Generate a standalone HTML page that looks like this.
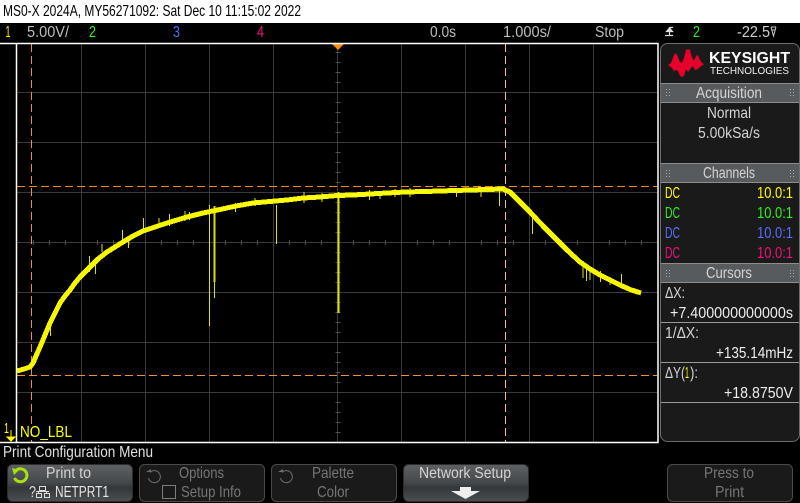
<!DOCTYPE html>
<html><head><meta charset="utf-8">
<style>
html,body{margin:0;padding:0;background:#000;width:800px;height:503px;overflow:hidden}
svg{display:block}
text{font-family:"Liberation Sans",sans-serif;font-size:16px;fill:#d4d4d4;white-space:pre}
.g{stroke:#3a3a3a;stroke-width:1;shape-rendering:crispEdges;fill:none}
.t{stroke:#505050;stroke-width:1;shape-rendering:crispEdges;fill:none}
.dim{fill:#767676}
</style></head><body>
<svg width="800" height="503" viewBox="0 0 800 503" xmlns="http://www.w3.org/2000/svg">
<defs>
<linearGradient id="b1" x1="0" y1="0" x2="0" y2="1"><stop offset="0" stop-color="#5d6163"/><stop offset=".5" stop-color="#44484a"/><stop offset=".62" stop-color="#33373a"/><stop offset="1" stop-color="#4b4f52"/></linearGradient>
</defs>
<rect width="800" height="503" fill="#000"/>
<rect width="800" height="23" fill="#fff"/>
<text x="3" y="16" textLength="298" lengthAdjust="spacingAndGlyphs" style="fill:#000">MS0-X 2024A, MY56271092: Sat Dec 10 11:15:02 2022</text>

<!-- top status row -->
<text x="5.500" y="37" textLength="5" lengthAdjust="spacingAndGlyphs" style="fill:#ff0">1</text>
<text x="27" y="37" textLength="42" lengthAdjust="spacingAndGlyphs" style="fill:#bdbdbd">5.00V/</text>
<text x="89" y="37" textLength="7" lengthAdjust="spacingAndGlyphs" style="fill:#33f01f">2</text>
<text x="173" y="37" textLength="7" lengthAdjust="spacingAndGlyphs" style="fill:#5570ff">3</text>
<text x="257" y="37" textLength="7" lengthAdjust="spacingAndGlyphs" style="fill:#f0107c">4</text>
<text x="430" y="37" textLength="26" lengthAdjust="spacingAndGlyphs" style="fill:#bdbdbd">0.0s</text>
<text x="503" y="37" textLength="48" lengthAdjust="spacingAndGlyphs" style="fill:#bdbdbd">1.000s/</text>
<text x="595" y="37" textLength="29" lengthAdjust="spacingAndGlyphs" style="fill:#bdbdbd">Stop</text>
<path d="M665 35.500H673M669.500 27V35M669.500 27.500H673M666.500 31.500H672.500L669.500 28Z" stroke="#ddd" stroke-width="1.200" fill="#ddd"/>
<text x="693" y="37" textLength="7" lengthAdjust="spacingAndGlyphs" style="fill:#33f01f">2</text>
<text x="737" y="37" textLength="33" lengthAdjust="spacingAndGlyphs" style="fill:#cfcfcf">-22.5</text>
<path d="M771 27h5M771 27l2.500 9 2.500-9M772 30h3" stroke="#ccc" fill="none"/>

<!-- grid -->
<g class="g">
<path d="M81.500 44V442M145.500 44V442M209.500 44V442M273.500 44V442M337.500 44V442M401.500 44V442M465.500 44V442M529.500 44V442M593.500 44V442"/>
<path d="M17 92.500H657M17 142.500H657M17 192.500H657M17 242.500H657M17 292.500H657M17 342.500H657M17 392.500H657"/>
</g>
<g class="t">
<path d="M335.500 52.500h5M335.500 62.500h5M335.500 72.500h5M335.500 82.500h5M335.500 102.500h5M335.500 112.500h5M335.500 122.500h5M335.500 132.500h5M335.500 152.500h5M335.500 162.500h5M335.500 172.500h5M335.500 182.500h5M335.500 202.500h5M335.500 212.500h5M335.500 222.500h5M335.500 232.500h5M335.500 252.500h5M335.500 262.500h5M335.500 272.500h5M335.500 282.500h5M335.500 302.500h5M335.500 312.500h5M335.500 322.500h5M335.500 332.500h5M335.500 352.500h5M335.500 362.500h5M335.500 372.500h5M335.500 382.500h5M335.500 402.500h5M335.500 412.500h5M335.500 422.500h5M335.500 432.500h5"/>
<path d="M33.500 240v5M49.500 240v5M65.500 240v5M97.500 240v5M113.500 240v5M129.500 240v5M161.500 240v5M177.500 240v5M193.500 240v5M225.500 240v5M241.500 240v5M257.500 240v5M289.500 240v5M305.500 240v5M321.500 240v5M353.500 240v5M369.500 240v5M385.500 240v5M417.500 240v5M433.500 240v5M449.500 240v5M481.500 240v5M497.500 240v5M513.500 240v5M545.500 240v5M561.500 240v5M577.500 240v5M609.500 240v5M625.500 240v5M641.500 240v5"/>
</g>

<!-- trigger marker -->
<path d="M332 44H344L338 50Z" fill="#ff8a10"/>

<!-- cursors -->
<g fill="none" stroke-width="1" shape-rendering="crispEdges">
<path d="M31.500 44V442" stroke="#f09030" stroke-dasharray="8 4"/>
<path d="M505.500 44V442" stroke="#f5c080" stroke-dasharray="8 4"/>
<path d="M17 186.500H657" stroke="#ff8410" stroke-dasharray="8 4"/>
<path d="M17 375.500H657" stroke="#e8962e" stroke-dasharray="8 4"/>
</g>

<!-- spikes -->
<g fill="none" stroke="#e2e200" stroke-width="1" shape-rendering="crispEdges">
<path d="M209.500 205V326M276.500 205V244M499.500 190V206M532.500 212V234M586.500 264V281M621.500 274V286M50.500 323V336M89.500 256V272M95.500 262V274M122.500 230V243M128.500 240V248M143.500 218V232M169.500 214V226M189.500 212V220M235.500 203V212M369.500 190V200M380 191V199M456.500 188V197M481 189V197M600.500 271V282M610 277V285M583 262V278M590 266V280"/>
<path d="M255 198V206M304 192V203M322 193V202M395 189V197M410 188V197M159 218V226M185 211V221M102 244V252"/>
</g>
<path d="M338.500 192V313" stroke="#e2e200" stroke-width="2" shape-rendering="crispEdges" fill="none"/>
<path d="M214.500 206V298" stroke="#dcdc00" stroke-width="1" shape-rendering="crispEdges" fill="none"/>
<path d="M214.500 206V282" stroke="#dcdc00" stroke-width="2" shape-rendering="crispEdges" fill="none"/>

<!-- trace -->
<polyline fill="none" stroke="#f6f600" stroke-width="5" stroke-linejoin="round" shape-rendering="crispEdges" points="17,371 24,369 30,367 33,363 36,356 40,347 45,335 50,323 55,313 60,303 65,296 70,290 75,283 80,277 85,272 90,267 98,259 107,252 115,247 123,242 133,236 143,231 155,227 167,223 177,220 187,217 203,213 220,209.500 236,206 253,203 270,201.500 287,200 303,198 320,197 337,195.500 353,195 370,194 387,193 405,192 425,191.500 440,191 470,190 503,189 510,192 520,202 530,212 543,226 557,240 568,251 580,262 590,269 600,275 610,280 620,285 630,289.500 641,293"/>
<polyline fill="none" stroke="#ffff10" stroke-width="2.500" shape-rendering="crispEdges" points="220,209.500 253,203 287,200 320,197 353,195 387,193 440,191 470,190 503,189"/>

<!-- frame -->
<g fill="none" stroke="#fff" stroke-width="1.500">
<path d="M0 43.500H658V442.500H0"/>
<path d="M16.500 43.500V442.500"/>
</g>

<!-- side panel -->
<rect x="660.500" y="43.500" width="139" height="398" rx="7" fill="#1a1a1a" stroke="#6e6e6e"/>
<polygon fill="#e8002a" points="668,65 671,63 674,55 676,53 678,57 680,62 682,63 684,58 686,50 688,49 690,50 692,58 694,61 696,56 698,55 700,60 702,63 704,64 700,67 698,69 695,70 693,66 691,68 688,72 686,69 684,76 682,77 680,76 678,71 676,70 674,71 672,68"/>
<text x="709" y="63" textLength="81" lengthAdjust="spacingAndGlyphs" style="font-weight:bold;font-size:16px;fill:#fff">KEYSIGHT</text>
<text x="710" y="74" textLength="79" lengthAdjust="spacingAndGlyphs" style="font-size:10px;fill:#eee">TECHNOLOGIES</text>

<g shape-rendering="crispEdges">
<rect x="661" y="83" width="138" height="19" fill="#585b5d"/><path d="M661 83.500H799M661 102.500H799" stroke="#8d8d8d"/>
<rect x="661" y="163" width="138" height="19" fill="#585b5d"/><path d="M661 163.500H799M661 182.500H799" stroke="#8d8d8d"/>
<rect x="661" y="263" width="138" height="19" fill="#585b5d"/><path d="M661 263.500H799M661 282.500H799" stroke="#8d8d8d"/>
<path d="M661 322.500H799M661 362.500H799M661 402.500H799" stroke="#999"/>
</g>
<g fill="#aaa" shape-rendering="crispEdges">
<path d="M666 89h1v1h-1zM669 89h1v1h-1zM666 92h1v1h-1zM669 92h1v1h-1zM666 95h1v1h-1zM669 95h1v1h-1zM790 89h1v1h-1zM793 89h1v1h-1zM790 92h1v1h-1zM793 92h1v1h-1zM790 95h1v1h-1zM793 95h1v1h-1z"/>
<path d="M666 170h1v1h-1zM669 170h1v1h-1zM666 173h1v1h-1zM669 173h1v1h-1zM666 176h1v1h-1zM669 176h1v1h-1zM790 170h1v1h-1zM793 170h1v1h-1zM790 173h1v1h-1zM793 173h1v1h-1zM790 176h1v1h-1zM793 176h1v1h-1z"/>
<path d="M666 270h1v1h-1zM669 270h1v1h-1zM666 273h1v1h-1zM669 273h1v1h-1zM666 276h1v1h-1zM669 276h1v1h-1zM790 270h1v1h-1zM793 270h1v1h-1zM790 273h1v1h-1zM793 273h1v1h-1zM790 276h1v1h-1zM793 276h1v1h-1z"/>
</g>
<text x="696" y="98" textLength="66" lengthAdjust="spacingAndGlyphs">Acquisition</text>
<text x="707" y="118" textLength="44" lengthAdjust="spacingAndGlyphs">Normal</text>
<text x="698" y="138" textLength="62" lengthAdjust="spacingAndGlyphs">5.00kSa/s</text>
<text x="703" y="178" textLength="52" lengthAdjust="spacingAndGlyphs">Channels</text>
<text x="706" y="278" textLength="46" lengthAdjust="spacingAndGlyphs">Cursors</text>

<text x="665" y="198" textLength="15" lengthAdjust="spacingAndGlyphs" style="fill:#ff0">DC</text>
<text x="757" y="198" textLength="36" lengthAdjust="spacingAndGlyphs" style="fill:#ff0">10.0:1</text>
<text x="665" y="218" textLength="15" lengthAdjust="spacingAndGlyphs" style="fill:#33f01f">DC</text>
<text x="757" y="218" textLength="36" lengthAdjust="spacingAndGlyphs" style="fill:#33f01f">10.0:1</text>
<text x="665" y="238" textLength="15" lengthAdjust="spacingAndGlyphs" style="fill:#5570ff">DC</text>
<text x="757" y="238" textLength="36" lengthAdjust="spacingAndGlyphs" style="fill:#5570ff">10.0:1</text>
<text x="665" y="258" textLength="15" lengthAdjust="spacingAndGlyphs" style="fill:#f0107c">DC</text>
<text x="757" y="258" textLength="36" lengthAdjust="spacingAndGlyphs" style="fill:#f0107c">10.0:1</text>

<text x="665" y="298" textLength="20" lengthAdjust="spacingAndGlyphs">ΔX:</text>
<text x="670" y="318" textLength="123" lengthAdjust="spacingAndGlyphs" style="fill:#eee">+7.400000000000s</text>
<text x="665" y="338" textLength="34" lengthAdjust="spacingAndGlyphs">1/ΔX:</text>
<text x="716" y="358" textLength="77" lengthAdjust="spacingAndGlyphs" style="fill:#eee">+135.14mHz</text>
<text x="665" y="378" textLength="20" lengthAdjust="spacingAndGlyphs">ΔY(</text>
<text x="685" y="378" textLength="4" lengthAdjust="spacingAndGlyphs" style="fill:#ff0">1</text>
<text x="690" y="378" textLength="8" lengthAdjust="spacingAndGlyphs">):</text>
<text x="724" y="398" textLength="69" lengthAdjust="spacingAndGlyphs" style="fill:#eee">+18.8750V</text>

<!-- bottom of plot -->
<text x="4" y="433" textLength="5" lengthAdjust="spacingAndGlyphs" style="fill:#ff0;font-size:15px">1</text>
<path d="M11 430V437M7 437H15L11 441Z" fill="#ff0" stroke="#ff0"/>
<text x="20" y="437" textLength="52" lengthAdjust="spacingAndGlyphs" style="fill:#ff0">NO_LBL</text>
<text x="3" y="457" textLength="150" lengthAdjust="spacingAndGlyphs" style="fill:#e0e0e0">Print Configuration Menu</text>

<!-- softkeys -->
<rect x="7.500" y="464.500" width="125" height="37" rx="5" fill="url(#b1)" stroke="#2c2c2c"/>
<rect x="139.500" y="464.500" width="125" height="37" rx="5" fill="#1a1a1a" stroke="#4a4a4a"/>
<rect x="271.500" y="464.500" width="125" height="37" rx="5" fill="#1a1a1a" stroke="#4a4a4a"/>
<rect x="403.500" y="464.500" width="125" height="37" rx="5" fill="url(#b1)" stroke="#2c2c2c"/>
<rect x="667.500" y="464.500" width="125" height="37" rx="5" fill="#1a1a1a" stroke="#4a4a4a"/>

<path d="M16 470.500A6.500 6.500 0 1 1 14.500 478" fill="none" stroke="#a8e010" stroke-width="3"/>
<path d="M12 468L19 470L14 475Z" fill="#a8e010"/>
<text x="46" y="478" textLength="45" lengthAdjust="spacingAndGlyphs">Print to</text>
<text x="29" y="497" textLength="7" lengthAdjust="spacingAndGlyphs" style="fill:#ddd">?</text>
<path d="M39.500 486.500h6v4h-6zM36.500 493.500h5v4h-5zM44.500 493.500h5v4h-5zM36 491.500h13M42.500 490v2M38.500 492v2M46.500 492v2" fill="none" stroke="#ddd" shape-rendering="crispEdges"/>
<text x="55" y="497" textLength="54" lengthAdjust="spacingAndGlyphs" style="fill:#e6e6e6">NETPRT1</text>

<path d="M150 472.500A6 6 0 1 1 148.500 478" fill="none" stroke="#6e6e6e" stroke-width="1"/>
<path d="M146 472h5v-3z" fill="#6e6e6e"/>
<text x="179" y="478" textLength="45" lengthAdjust="spacingAndGlyphs" class="dim">Options</text>
<rect x="162.500" y="485.500" width="13" height="13" fill="none" stroke="#7c7c7c" shape-rendering="crispEdges"/>
<text x="181" y="497" textLength="60" lengthAdjust="spacingAndGlyphs" class="dim">Setup Info</text>

<path d="M282 472.500A6 6 0 1 1 280.500 478" fill="none" stroke="#6e6e6e" stroke-width="1"/>
<path d="M278 472h5v-3z" fill="#6e6e6e"/>
<text x="312" y="478" textLength="42" lengthAdjust="spacingAndGlyphs" class="dim">Palette</text>
<text x="317" y="497" textLength="32" lengthAdjust="spacingAndGlyphs" class="dim">Color</text>

<text x="419" y="478" textLength="92" lengthAdjust="spacingAndGlyphs">Network Setup</text>
<path d="M460 487H471V491H480L465.500 499L451 491H460Z" fill="#eee"/>

<text x="704" y="478" textLength="50" lengthAdjust="spacingAndGlyphs" class="dim">Press to</text>
<text x="715" y="497" textLength="29" lengthAdjust="spacingAndGlyphs" class="dim">Print</text>
</svg>
</body></html>
